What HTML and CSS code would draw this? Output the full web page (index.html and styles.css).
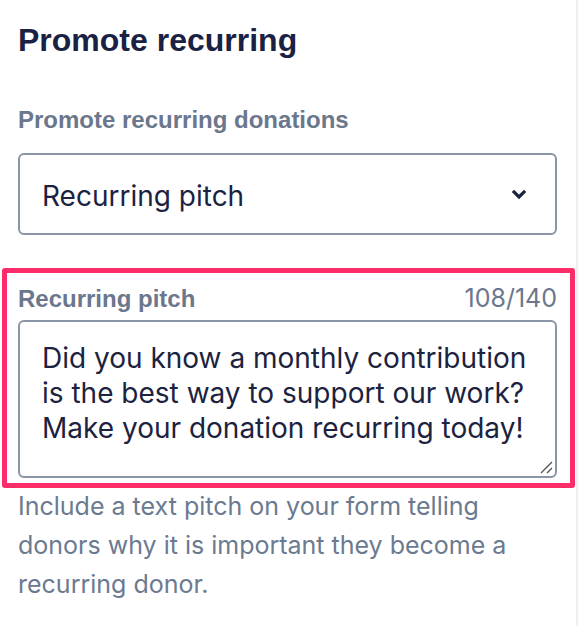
FILE: index.html
```html
<!DOCTYPE html>
<html>
<head>
<meta charset="utf-8">
<link rel="stylesheet" href="styles.css">
</head>
<body>
<div class="page">
  <div class="panel">
    <h2 class="title">Promote recurring</h2>
    <div class="field">
      <label class="label">Promote recurring donations</label>
      <div class="select">
        <span class="select-value">Recurring pitch</span>
        <svg class="chevron" width="14" height="10" viewBox="0 0 14 10"><path d="M2 2 L7 7 L12 2" fill="none" stroke="#1c2340" stroke-width="3.2" stroke-linecap="square"/></svg>
      </div>
    </div>
    <div class="highlight">
      <div class="label-row">
        <span class="label">Recurring pitch</span>
        <span class="counter">108/140</span>
      </div>
      <div class="textarea">
        <p class="textarea-text">Did you know a monthly contribution is the best way to support our work? Make your donation recurring today!</p>
        <svg class="grip" width="14" height="14" viewBox="0 0 14 14"><path d="M2 13 L13 2 M8 13 L13 8" stroke="#555" stroke-width="1.4"/></svg>
      </div>
    </div>
    <p class="help">Include a text pitch on your form telling donors why it is important they become a recurring donor.</p>
  </div>
  <div class="edge"></div>
</div>
</body>
</html>
```
FILE: styles.css
```css
html, body {
  margin: 0;
  padding: 0;
  background: #ffffff;
}
.page {
  display: flex;
  width: 578px;
  min-height: 626px;
}
.panel {
  flex: 1;
  padding: 0 1px 0 2px;
}
.edge {
  width: 2px;
  background: #efefef;
}
.title {
  font-family: "Liberation Sans", Arial, sans-serif;
  font-weight: bold;
  font-size: 32px;
  line-height: 38px;
  color: #1b2142;
  margin: 21px 0 0 16px;
}
.field {
  margin: 47px 18px 0 16px;
}
.label {
  display: block;
  font-family: "Liberation Sans", Arial, sans-serif;
  font-weight: bold;
  font-size: 24px;
  line-height: 28px;
  color: #6b778c;
}
.select {
  box-sizing: border-box;
  margin-top: 19px;
  height: 82px;
  border: 2px solid #8a95a7;
  border-radius: 6px;
  display: flex;
  align-items: center;
  justify-content: space-between;
  padding: 0 29px 0 22px;
}
.select-value {
  margin-top: 4px;
  font-family: Inter, "Noto Sans", sans-serif;
  font-size: 28px;
  color: #1c2340;
}
.chevron {
  display: block;
  margin-top: 2px;
}
.highlight {
  margin-top: 33px;
  border: 5px solid #fd2d6a;
  border-radius: 3px;
  padding: 10px 13px 5px 11px;
}
.label-row {
  display: flex;
  justify-content: space-between;
  align-items: baseline;
}
.counter {
  font-family: Inter, "Noto Sans", sans-serif;
  font-size: 25px;
  color: #6b778c;
}
.textarea {
  box-sizing: border-box;
  position: relative;
  margin-top: 7px;
  height: 158px;
  border: 2px solid #8a95a7;
  border-radius: 6px;
  padding: 19px 22px 0 22px;
}
.textarea-text {
  margin: 0;
  font-family: Inter, "Noto Sans", sans-serif;
  font-size: 28px;
  line-height: 35px;
  color: #1c2340;
}
.grip {
  position: absolute;
  right: 2px;
  bottom: 2px;
}
.help {
  margin: -1px 0 0 16px;
  width: 510px;
  font-family: Inter, "Noto Sans", sans-serif;
  font-size: 25px;
  line-height: 39px;
  color: #6b7a90;
}
```
